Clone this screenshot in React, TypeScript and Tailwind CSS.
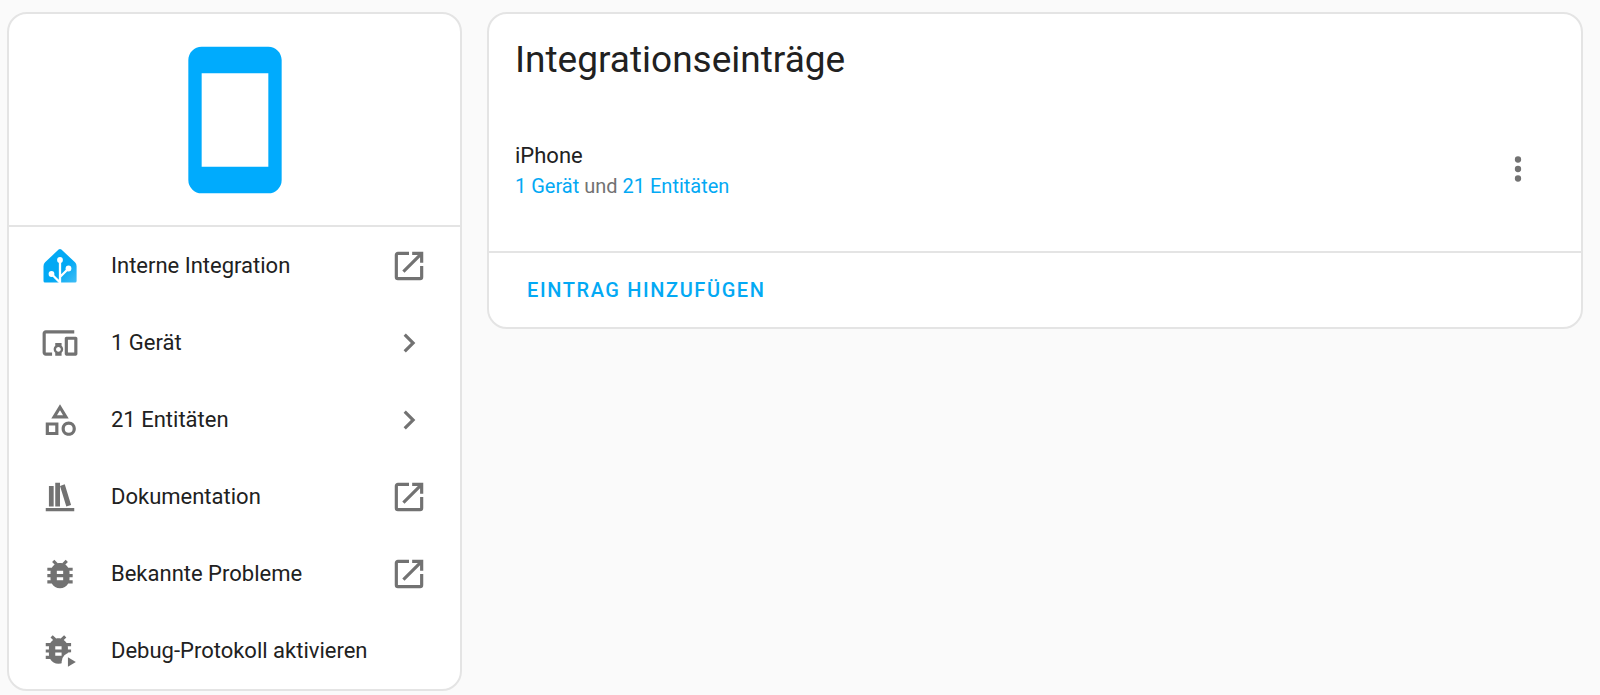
interface IconProps {
  path: string;
  className?: string;
}

interface LinkRowProps {
  label: string;
  path?: string;
  trailing?: string;
}

const CELLPHONE =
  "M17,19H7V5H17M17,1H7C5.89,1 5,1.89 5,3V21A2,2 0 0,0 7,23H17A2,2 0 0,0 19,21V3C19,1.89 18.1,1 17,1Z";
const DEVICES =
  "M3 6h18V4H3c-1.1 0-2 .9-2 2v12c0 1.1.9 2 2 2h4v-2H3V6zm10 6H9v1.78c-.61.55-1 1.33-1 2.22s.39 1.67 1 2.22V20h4v-1.78c.61-.55 1-1.34 1-2.22s-.39-1.67-1-2.22V12zm-2 5.5c-.83 0-1.5-.67-1.5-1.5s.67-1.5 1.5-1.5 1.5.67 1.5 1.5-.67 1.5-1.5 1.5zM22 8h-6c-.5 0-1 .5-1 1v10c0 .5.5 1 1 1h6c.5 0 1-.5 1-1V9c0-.5-.5-1-1-1zm-1 10h-4v-8h4v8z";
const SHAPE =
  "M11,13.5V21.5H3V13.5H11M9,15.5H5V19.5H9V15.5M12,2L17.5,11H6.5L12,2M12,5.86L10.08,9H13.92L12,5.86M17.5,13C20,13 22,15 22,17.5C22,20 20,22 17.5,22C15,22 13,20 13,17.5C13,15 15,13 17.5,13M17.5,15A2.5,2.5 0 0,0 15,17.5A2.5,2.5 0 0,0 17.5,20A2.5,2.5 0 0,0 20,17.5A2.5,2.5 0 0,0 17.5,15Z";
const BOOKSHELF =
  "M9 3V18H12V3H9M12 5L16 18L19 17L15 4L12 5M5 5V18H8V5H5M3 19V21H21V19H3Z";
const BUG =
  "M14,12H10V10H14M14,16H10V14H14M20,8H17.19C16.74,7.22 16.12,6.55 15.37,6.04L17,4.41L15.59,3L13.42,5.17C12.96,5.06 12.5,5 12,5C11.5,5 11.04,5.06 10.59,5.17L8.41,3L7,4.41L8.62,6.04C7.88,6.55 7.26,7.22 6.81,8H4V10H6.09C6.04,10.33 6,10.66 6,11V12H4V14H6V15C6,15.34 6.04,15.67 6.09,16H4V18H6.81C7.85,19.79 9.78,21 12,21C14.22,21 16.15,19.79 17.19,18H20V16H17.91C17.96,15.67 18,15.34 18,15V14H20V12H18V11C18,10.66 17.96,10.33 17.91,10H20V8Z";
const OPEN_IN_NEW =
  "M14,3V5H17.59L7.76,14.83L9.17,16.24L19,6.41V10H21V3M19,19H5V5H12V3H5C3.89,3 3,3.9 3,5V19A2,2 0 0,0 5,21H19A2,2 0 0,0 21,19V12H19V19Z";
const CHEVRON_RIGHT =
  "M8.59,16.58L13.17,12L8.59,7.41L10,6L16,12L10,18L8.59,16.58Z";
const DOTS_VERTICAL =
  "M12,16A2,2 0 0,1 14,18A2,2 0 0,1 12,20A2,2 0 0,1 10,18A2,2 0 0,1 12,16M12,10A2,2 0 0,1 14,12A2,2 0 0,1 12,14A2,2 0 0,1 10,12A2,2 0 0,1 12,10M12,4A2,2 0 0,1 14,6A2,2 0 0,1 12,8A2,2 0 0,1 10,6A2,2 0 0,1 12,4Z";

function Icon({ path, className = "size-[38px] text-[#727272]" }: IconProps) {
  return (
    <svg viewBox="0 0 24 24" fill="currentColor" aria-hidden="true" className={className}>
      <path d={path} />
    </svg>
  );
}

function HomeLogo() {
  return (
    <svg viewBox="0 0 38 38" aria-hidden="true" className="size-[38px]">
      <defs>
        <linearGradient id="house" x1="0" y1="0" x2="1" y2="1">
          <stop offset="0.6" stopColor="#03a9f4" />
          <stop offset="1" stopColor="#41bdf5" />
        </linearGradient>
      </defs>
      <path
        fill="url(#house)"
        d="M17.6 2.6a2 2 0 0 1 2.8 0L34 15.2q1.6 1.6 1.6 4V34a1.500 1.500 0 0 1-1.500 1.500H4a1.500 1.500 0 0 1-1.500-1.500V19.200q0-2.400 1.600-4z"
      />
      <g stroke="#fff" strokeWidth="2.3" fill="none">
        <path d="M19 13V36M19 30L27.500 21.500M19 35.500L10.500 27" />
      </g>
      <g fill="#fff">
        <circle cx="19" cy="13" r="2.900" />
        <circle cx="27.500" cy="21.500" r="2.900" />
        <circle cx="10.500" cy="27" r="2.900" />
      </g>
    </svg>
  );
}

function BugPlayIcon() {
  return (
    <svg viewBox="0 0 24 24" fill="currentColor" aria-hidden="true" className="size-[38px] text-[#727272]">
      <mask id="cutout" maskUnits="userSpaceOnUse" x="0" y="0" width="24" height="24">
        <rect width="24" height="24" fill="#fff" />
        <circle cx="19" cy="19" r="6" fill="#000" />
      </mask>
      <g mask="url(#cutout)">
        <path d={BUG} transform="translate(-1 -1)" />
      </g>
      <path d="M17 16V22L22 19Z" />
    </svg>
  );
}

function RowContent({ label, path, trailing }: LinkRowProps) {
  return (
    <>
      {path ? <Icon path={path} /> : <HomeLogo />}
      <span className="flex-1">{label}</span>
      {trailing && <Icon path={trailing} />}
    </>
  );
}

function LinkRow(props: LinkRowProps) {
  return (
    <li>
      <a href="#" className="flex h-[77px] items-center gap-8 px-8">
        <RowContent {...props} />
      </a>
    </li>
  );
}

function Sidebar() {
  return (
    <aside className="w-[455px] shrink-0 rounded-[20px] border-2 border-[#e4e4e4] bg-white">
      <div className="flex justify-center border-b-2 border-[#e4e4e4] pt-[26px] pb-[25px]">
        <Icon path={CELLPHONE} className="size-[160px] text-[#00abfd]" />
      </div>
      <ul className="text-[22px]">
        <LinkRow label="Interne Integration" trailing={OPEN_IN_NEW} />
        <LinkRow label="1 Gerät" path={DEVICES} trailing={CHEVRON_RIGHT} />
        <LinkRow label="21 Entitäten" path={SHAPE} trailing={CHEVRON_RIGHT} />
        <LinkRow label="Dokumentation" path={BOOKSHELF} trailing={OPEN_IN_NEW} />
        <LinkRow label="Bekannte Probleme" path={BUG} trailing={OPEN_IN_NEW} />
        <li>
          <button type="button" className="flex h-[77px] w-full items-center gap-8 px-8 text-left">
            <BugPlayIcon />
            <span>Debug-Protokoll aktivieren</span>
          </button>
        </li>
      </ul>
    </aside>
  );
}

function Entries() {
  return (
    <main className="min-w-0 flex-1 rounded-[20px] border-2 border-[#e4e4e4] bg-white">
      <h1 className="px-[26px] pt-5 text-[37px] leading-[52px]">Integrationseinträge</h1>
      <div className="flex items-center justify-between py-[50px] pr-11 pl-[26px]">
        <div className="pt-[5px] leading-[30px]">
          <h2 className="text-[22px]">iPhone</h2>
          <p className="text-[20px] text-[#727272]">
            <a href="#" className="text-[#03a9f4]">1 Gerät</a> und{" "}
            <a href="#" className="text-[#03a9f4]">21 Entitäten</a>
          </p>
        </div>
        <button type="button" aria-label="Menü">
          <Icon path={DOTS_VERTICAL} />
        </button>
      </div>
      <div className="border-t-2 border-[#e4e4e4] px-[26px] py-3">
        <button
          type="button"
          className="h-[50px] px-3 text-[20px] font-medium tracking-[0.08em] text-[#03a9f4] uppercase"
        >
          Eintrag hinzufügen
        </button>
      </div>
    </main>
  );
}

export default function App() {
  return (
    <div className="flex min-h-screen items-start gap-[25px] bg-[#fafafa] pt-3 pr-[17px] pl-[7px] font-[Roboto,sans-serif] text-[#212121]">
      <Sidebar />
      <Entries />
    </div>
  );
}
